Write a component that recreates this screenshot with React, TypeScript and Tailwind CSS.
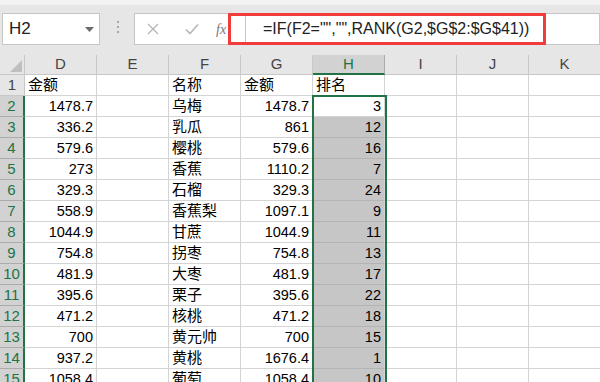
const cols = ["D", "E", "F", "G", "H", "I", "J", "K"];

const rows: [string, string, string, string, string][] = [
  ["金额", "", "名称", "金额", "排名"],
  ["1478.7", "", "乌梅", "1478.7", "3"],
  ["336.2", "", "乳瓜", "861", "12"],
  ["579.6", "", "樱桃", "579.6", "16"],
  ["273", "", "香蕉", "1110.2", "7"],
  ["329.3", "", "石榴", "329.3", "24"],
  ["558.9", "", "香蕉梨", "1097.1", "9"],
  ["1044.9", "", "甘蔗", "1044.9", "11"],
  ["754.8", "", "拐枣", "754.8", "13"],
  ["481.9", "", "大枣", "481.9", "17"],
  ["395.6", "", "栗子", "395.6", "22"],
  ["471.2", "", "核桃", "471.2", "18"],
  ["700", "", "黄元帅", "700", "15"],
  ["937.2", "", "黄桃", "1676.4", "1"],
  ["1058.4", "", "葡萄", "1058.4", "10"],
];

const font = "font-['Liberation_Sans','Noto_Sans_CJK_SC',sans-serif]";

function Cell({ value, row, col }: { value: string; row: number; col: number }) {
  const numeric = /^[\d.]+$/.test(value);
  const selected = col === 4 && row >= 2;
  const active = col === 4 && row === 2;
  return (
    <div
      className={`h-[21px] border-b border-r border-[#d4d4d4] px-[3px] flex items-end pb-[1px] overflow-hidden whitespace-nowrap ${
        numeric ? "justify-end text-[14.5px]" : "justify-start text-[15px] pl-[3px]"
      } ${selected && !active ? "bg-[#c6c6c6] border-b-[#b4b4b4]" : "bg-white"} text-black leading-[18px]`}
    >
      {value}
    </div>
  );
}

export default function App() {
  return (
    <div className={`w-[600px] h-[382px] overflow-hidden bg-[#e6e6e6] ${font}`}>
      {/* Formula bar */}
      <div className="h-[55px] bg-[#e6e6e6] border-t-[5px] border-[#f3f3f3] relative">
        <div className="absolute left-[2px] top-[8px] w-[98px] h-[32px] bg-white border border-[#c6c6c6] flex items-center pl-[6px] text-[17px] text-[#222]">
          H2
          <svg className="absolute right-[5px] top-[13px]" width="9" height="5" viewBox="0 0 9 5">
            <path d="M0 0 L9 0 L4.5 5 Z" fill="#6b6b6b" />
          </svg>
        </div>
        <div className="absolute left-[117px] top-[16px] flex flex-col gap-[3px]">
          <span className="w-[2px] h-[2px] bg-[#a8a8a8]" />
          <span className="w-[2px] h-[2px] bg-[#a8a8a8]" />
          <span className="w-[2px] h-[2px] bg-[#a8a8a8]" />
        </div>
        <div className="absolute left-[134px] top-[8px] w-[466px] h-[32px] bg-white border border-[#c6c6c6] flex items-center">
          <svg className="ml-[12px]" width="12" height="12" viewBox="0 0 12 12">
            <path d="M1 1 L11 11 M11 1 L1 11" stroke="#b8b8b8" strokeWidth="1.4" />
          </svg>
          <svg className="ml-[26px]" width="14" height="12" viewBox="0 0 14 12">
            <path d="M1 6.5 L5 10.5 L13 1.5" stroke="#b8b8b8" strokeWidth="1.6" fill="none" />
          </svg>
          <span className="ml-[17px] text-[14px] italic text-[#777] font-['Liberation_Serif',serif]">fx</span>
        </div>
        <div className="absolute left-[228px] top-[8px] w-[318px] h-[32px] border-[3px] border-[#f23b3b] flex items-center">
          <div className="ml-[14px] w-[1px] h-[26px] bg-[#c6c6c6]" />
          <span className="ml-[17px] text-[16px] text-[#222] whitespace-nowrap">
            =IF(F2=&quot;&quot;,&quot;&quot;,RANK(G2,$G$2:$G$41))
          </span>
        </div>
      </div>

      {/* Grid */}
      <div className="relative">
        <div className="grid grid-cols-[25px_repeat(8,72px)]">
          <div className="h-[20px] bg-[#e6e6e6] border-r border-b border-[#c8c8c8] relative">
            <svg className="absolute right-[2px] bottom-[2px]" width="12" height="12" viewBox="0 0 12 12">
              <path d="M12 0 L12 12 L0 12 Z" fill="#bfbfbf" />
            </svg>
          </div>
          {cols.map((c) => (
            <div
              key={c}
              className={`h-[20px] border-r flex items-center justify-center text-[15px] ${
                c === "H"
                  ? "bg-[#d2d2d2] border-[#ababab] border-b-2 border-b-[#217346] text-[#217346]"
                  : "bg-[#e6e6e6] border-[#c8c8c8] border-b text-[#444]"
              }`}
            >
              {c}
            </div>
          ))}
          {rows.map((r, i) => {
            const row = i + 1;
            const sel = row >= 2;
            return [
              <div
                key={`h${row}`}
                className={`h-[21px] border-b flex items-center justify-center text-[15px] ${
                  sel
                    ? "bg-[#d2d2d2] border-[#ababab] border-r-2 border-r-[#217346] text-[#217346]"
                    : "bg-[#e6e6e6] border-[#c8c8c8] border-r text-[#444]"
                }`}
              >
                {row}
              </div>,
              ...[...r, "", "", ""].map((v, ci) => (
                <Cell key={`${row}-${ci}`} value={v} row={row} col={ci} />
              )),
            ];
          })}
        </div>
        {/* Selection border */}
        <div className="absolute left-[312px] top-[40px] w-[75px] h-[320px] border-2 border-[#217346] pointer-events-none" />
      </div>
    </div>
  );
}
